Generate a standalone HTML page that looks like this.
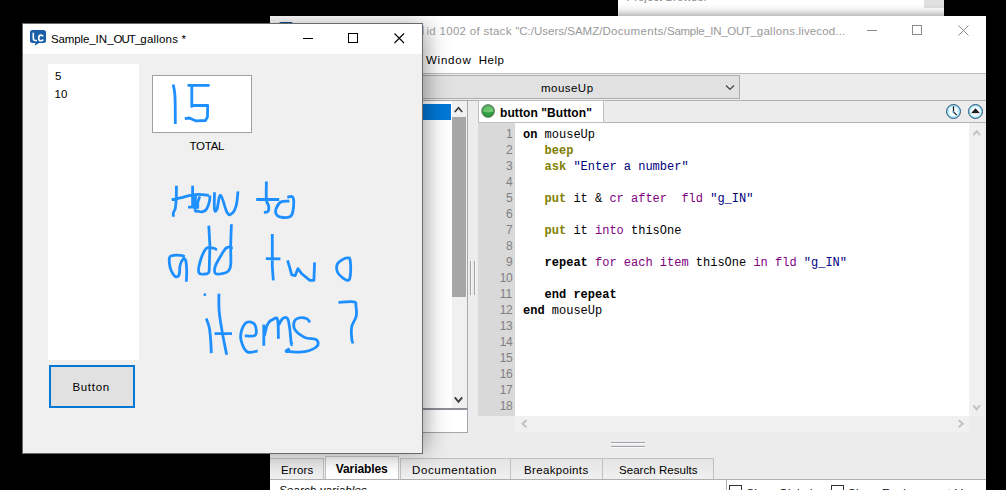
<!DOCTYPE html>
<html>
<head>
<meta charset="utf-8">
<style>
*{box-sizing:border-box;margin:0;padding:0}
html,body{width:1006px;height:490px;overflow:hidden;background:#000}
body{position:relative;font-family:"Liberation Sans",sans-serif;font-size:12px;color:#000}
.a{position:absolute}
.t{position:absolute;white-space:pre;line-height:1}
.m{font-family:"Liberation Mono",monospace}
svg{position:absolute;overflow:visible}
</style>
</head>
<body>
<!-- ===== project browser sliver ===== -->
<div class="a" style="left:618px;top:0;width:326px;height:16px;background:#fff"></div>
<div class="a" style="left:924px;top:0;width:20px;height:8px;background:#e1e1e1"></div>

<!-- ===== script editor window ===== -->
<div class="a" id="bw" style="left:270px;top:16px;width:716px;height:474px;background:#ececec;box-shadow:0 0 10px 1px rgba(0,0,0,.45)">
  <!-- title + menu -->
  <div class="a" style="left:0;top:0;width:716px;height:58px;background:#fff"></div>
  <div class="a" style="left:9px;top:6px;width:14px;height:3px;background:#0a4a8a;border-radius:2px 2px 0 0"></div>
  <div class="a" style="left:153px;top:10px;width:1px;height:9px;background:#b9c6dc"></div>
  <!-- toolbar -->
  <div class="a" style="left:0;top:57px;width:716px;height:28px;background:#ececec;border-top:1px solid #bdbdbd;border-bottom:1px solid #b0b0b0"></div>
  <!-- dropdown -->
  <div class="a" style="left:100px;top:59px;width:370px;height:24px;background:#e1e1e1;border:1px solid #adadad"></div>
  <!-- tab strip line -->
  <div class="a" style="left:208px;top:106px;width:508px;height:1px;background:#b4b4b4"></div>
  <!-- object tab -->
  <div class="a" style="left:208px;top:84px;width:126px;height:23px;background:#fff;border:1px solid #c0c0c0"></div>
  <!-- left list pane -->
  <div class="a" style="left:140px;top:84px;width:58px;height:309px;background:#fff;border:1px solid #a8a8a8"></div>
  <div class="a" style="left:140px;top:88px;width:41px;height:16px;background:#0078d7"></div>
  <div class="a" style="left:182px;top:85px;width:15px;height:307px;background:#f0f0f0"></div>
  <div class="a" style="left:182px;top:101px;width:14px;height:180px;background:#a6a6a6"></div>
  <div class="a" style="left:140px;top:392px;width:58px;height:25px;background:#fff;border:1px solid #a4a4ac;border-top:2px solid #8e8e96"></div>
  <!-- code editor -->
  <div class="a" style="left:208px;top:107px;width:37px;height:293px;background:#d9d9d9"></div>
  <div class="a" style="left:245px;top:107px;width:454px;height:293px;background:#fff"></div>
  <!-- v scrollbar -->
  <div class="a" style="left:699px;top:107px;width:15px;height:293px;background:#f0f0f0"></div>
  <!-- h scrollbar -->
  <div class="a" style="left:245px;top:400px;width:454px;height:16px;background:#f0f0f0"></div>
  <!-- grip -->
  <div class="a" style="left:341px;top:426px;width:34px;height:1px;background:#a0a0a8"></div>
  <div class="a" style="left:341px;top:427px;width:34px;height:1px;background:#fafafa"></div>
  <div class="a" style="left:341px;top:430px;width:34px;height:1px;background:#a0a0a8"></div>
  <div class="a" style="left:341px;top:431px;width:34px;height:1px;background:#fafafa"></div>
  <div class="a" style="left:200px;top:245px;width:1px;height:34px;background:#a0a0a8"></div>
  <div class="a" style="left:201px;top:245px;width:1px;height:34px;background:#f8f8f8"></div>
  <div class="a" style="left:204px;top:245px;width:1px;height:34px;background:#a0a0a8"></div>
  <div class="a" style="left:205px;top:245px;width:1px;height:34px;background:#f8f8f8"></div>
  <!-- bottom tabs -->
  <div class="a" style="left:0;top:442px;width:54px;height:21px;background:linear-gradient(#e4e4e4,#f0f0f0);border:1px solid #c0c0c0;border-bottom:none;border-left:none"></div>
  <div class="a" style="left:130px;top:442px;width:111px;height:21px;background:linear-gradient(#e4e4e4,#f0f0f0);border:1px solid #c0c0c0;border-bottom:none"></div>
  <div class="a" style="left:241px;top:442px;width:92px;height:21px;background:linear-gradient(#e4e4e4,#f0f0f0);border:1px solid #c0c0c0;border-bottom:none;border-left:none"></div>
  <div class="a" style="left:333px;top:442px;width:111px;height:21px;background:linear-gradient(#e4e4e4,#f0f0f0);border:1px solid #c0c0c0;border-bottom:none;border-left:none"></div>
  <div class="a" style="left:55px;top:440px;width:74px;height:23px;background:linear-gradient(#f2f2f2,#fff 70%);border:1px solid #c4c4c4;border-bottom:none"></div>
  <!-- bottom panel -->
  <div class="a" style="left:0;top:463px;width:716px;height:11px;background:#fff;border-top:1px solid #b0b0b0"></div>
  <div class="a" style="left:0;top:463px;width:457px;height:11px;background:#fff;border:1px solid #b0b0b0;border-left:none;border-bottom:none"></div>
  <div class="a" style="left:459px;top:469px;width:13px;height:13px;background:#fff;border:1px solid #333"></div>
  <div class="a" style="left:561px;top:469px;width:13px;height:13px;background:#fff;border:1px solid #333"></div>
  <!-- icons -->
  <svg style="left:0;top:0" width="716" height="474" viewBox="270 16 716 474">
    <!-- window controls -->
    <g stroke="#8a8a8a" stroke-width="1" fill="none" shape-rendering="crispEdges">
      <path d="M867 30.5h10"/>
      <rect x="912.5" y="25.5" width="9" height="9"/>
    </g>
    <path d="M958.5 25.5l10 10M968.5 25.5l-10 10" stroke="#8a8a8a" stroke-width="1" fill="none"/>
    <!-- dropdown chevron -->
    <path d="M726 85.5l4 4 4-4" stroke="#444" stroke-width="1.2" fill="none"/>
    <!-- list scrollbar arrows -->
    <path d="M454.800 112l3.700-4.200 3.700 4.200" stroke="#383838" stroke-width="1.600" fill="none"/>
    <path d="M454.800 397.400l3.700 4.400 3.700-4.400" stroke="#404040" stroke-width="2" fill="none"/>
    <!-- code scrollbar arrows -->
    <path d="M973.300 135.200l3.300-4 3.300 4" stroke="#c0c0c0" stroke-width="1.900" fill="none"/>
    <path d="M973.300 405.400l3.300 4 3.300-4" stroke="#c0c0c0" stroke-width="1.900" fill="none"/>
    <path d="M526.500 420.200l-4 3.600 4 3.600" stroke="#c0c0c0" stroke-width="1.900" fill="none"/>
    <path d="M958.700 420.200l4 3.600-4 3.600" stroke="#c0c0c0" stroke-width="1.900" fill="none"/>
    <!-- green ball -->
    <defs>
      <linearGradient id="gb" x1="0" y1="0" x2="0" y2="1"><stop offset="0" stop-color="#4fb254"/><stop offset=".5" stop-color="#33a142"/><stop offset="1" stop-color="#2c9a3c"/></linearGradient><linearGradient id="gl" x1="0" y1="0" x2="1" y2="1"><stop offset="0" stop-color="#54b558"/><stop offset="1" stop-color="#86cf84"/></linearGradient>
    </defs>
    <circle cx="488.100" cy="111" r="6.300" fill="url(#gb)" stroke="#4c5c50" stroke-width=".9"/><path d="M482.600 111.600a5.500 5.500 0 0 1 11 0q-5.500 1.600-11 0z" fill="url(#gl)"/>
    <!-- clock -->
    <defs>
      <radialGradient id="cg" cx="50%" cy="50%" r="50%"><stop offset="0" stop-color="#fff"/><stop offset=".62" stop-color="#f4fbff"/><stop offset=".86" stop-color="#98dff8"/><stop offset="1" stop-color="#62c6ee"/></radialGradient>
    </defs>
    <circle cx="953.500" cy="111.500" r="7" fill="url(#cg)" stroke="#2f4a66" stroke-width=".9"/>
    <path d="M953.500 106.200v5.800l3.300 3.100" stroke="#222" stroke-width="1.300" fill="none"/>
    <circle cx="953.300" cy="112" r=".9" fill="#49a6d8"/>
    <path d="M948.300 111.500h.9M957.800 111.500h.9M953.500 116.200v.9" stroke="#8fd4f2" stroke-width=".9"/>
    <!-- up triangle button -->
    <circle cx="975.500" cy="111.500" r="7" fill="url(#cg)" stroke="#2f4a66" stroke-width=".9"/>
    <path d="M971 113.200L975.500 108.300 980 113.200z" fill="#1e1e1e"/>
    <path d="M971.300 114h8.400" stroke="#fff" stroke-width=".9"/>
  </svg>
</div>

<!-- ===== stack window ===== -->
<div class="a" id="fw" style="left:22px;top:23px;width:401px;height:431px;background:#f0f0f0;border:1px solid #6a6a6a;box-shadow:6px 0 22px -4px rgba(0,0,0,.42)">
  <div class="a" style="left:0;top:0;width:399px;height:30px;background:#fff"></div>
  <!-- field -->
  <div class="a" style="left:25px;top:40px;width:91px;height:296px;background:#fff"></div>
  <!-- total box -->
  <div class="a" style="left:129px;top:51px;width:100px;height:58px;background:#fff;border:1px solid #a0a0a0"></div>
  <!-- button -->
  <div class="a" style="left:26px;top:341px;width:86px;height:43px;background:#e1e1e1;border:2px solid #0078d7"></div>
  <svg style="left:0;top:0" width="399" height="429" viewBox="23 24 399 429">
    <!-- LC icon -->
    <path d="M32.500 30h11a2.500 2.500 0 0 1 2.500 2.500v8a2.500 2.500 0 0 1-2.500 2.500h-4.300l-4.600 2.700 .9-2.700h-3a2.500 2.500 0 0 1-2.500-2.500v-8a2.500 2.500 0 0 1 2.500-2.500z" fill="#1a5fa8"/>
    <path d="M33.300 32.700v5.500q0 2.300 2.300 2.300h1.400M43.200 36.400q-.8-1.300-2.200-1.300-2.300 0-2.300 2.800t2.300 2.800q1.400 0 2.200-1.200" stroke="#fff" stroke-width="1.600" fill="none"/>
    <!-- window controls -->
    <g stroke="#000" stroke-width="1" fill="none" shape-rendering="crispEdges">
      <path d="M303 38.500h10"/>
      <rect x="348.500" y="33.500" width="9" height="9"/>
    </g>
    <path d="M394.500 33.500l9.500 9.500M404 33.500l-9.500 9.500" stroke="#000" stroke-width="1.100" fill="none"/>
    <path d="M173.2 84.4C173.5 86.0 174.3 89.2 174.7 93.0C175.1 96.8 175.1 99.3 175.2 105.0C175.3 110.7 175.3 120.5 175.3 124.0 M187.5 85.4 L209.6 85.4 M191.8 85.4 L191.8 106.5 L192.0 105.5 L207.7 105.5 L207.5 116.8 L205.5 120.5 L195.5 120.8 L189.4 118.0 L184.8 118.6 M176.4 185.7C176.4 188.2 176.4 195.3 176.2 199.5C176.0 203.7 175.7 206.3 175.2 208.7C174.7 211.1 173.7 211.2 173.4 212.7C173.1 214.2 173.4 216.0 173.4 216.8 M171.6 199.7C173.2 199.4 176.8 198.7 180.3 197.9C183.8 197.1 187.1 196.0 190.5 195.4C193.9 194.8 195.3 194.4 198.7 194.4C202.1 194.4 207.0 195.2 208.9 195.4 M192.6 185.7 L192.6 206.6 M188.0 207.1 L194.6 207.1 M195.6 195.4C195.5 198.0 194.7 206.8 195.1 209.7C195.5 212.6 196.3 210.8 197.7 211.2C199.1 211.6 201.1 212.2 202.8 211.7C204.5 211.2 205.6 210.6 206.8 208.7C208.0 206.8 208.8 203.9 209.4 201.5C210.0 199.1 209.8 196.5 209.9 195.4 M199.7 196.4 L197.7 202.5 L197.7 208.7 M214.5 192.3C214.5 195.4 214.0 206.1 214.5 209.2C215.0 212.3 215.9 211.7 217.0 209.2C218.1 206.7 218.7 194.8 220.6 195.4C222.5 196.0 225.1 209.4 227.2 212.7C229.3 216.0 230.6 214.7 232.3 213.2C234.0 211.7 235.4 208.6 236.4 204.6C237.4 200.6 237.7 193.7 238.0 191.3 M266.4 181.6C266.4 184.9 266.0 195.1 266.4 199.5C266.8 203.9 268.1 203.6 268.5 205.6C268.9 207.6 268.8 209.2 268.5 210.4C268.2 211.6 267.8 211.7 267.0 212.1C266.2 212.5 264.5 212.3 263.9 212.4 M256.2 199.5 L279.2 199.5 M287.3 197.2C288.3 197.2 292.0 194.9 293.0 197.4C294.0 199.9 293.6 207.1 293.0 210.7C292.4 214.3 292.3 215.7 289.9 216.8C287.5 217.9 282.2 217.4 279.7 216.8C277.2 216.2 276.8 215.3 276.1 213.8C275.4 212.3 275.3 210.9 276.1 208.7C276.9 206.5 278.3 203.4 280.7 202.0C283.1 200.6 287.8 201.2 289.4 201.0 M184.9 256.7C184.1 256.5 182.7 255.6 180.7 255.4C178.7 255.2 175.8 255.0 173.8 255.4C171.8 255.8 170.3 255.3 169.6 257.4C168.9 259.5 169.4 264.0 170.0 267.1C170.6 270.2 171.9 272.3 173.1 274.1C174.3 275.9 175.5 276.9 176.6 276.9C177.7 276.9 178.7 276.1 179.3 274.1C179.9 272.1 179.4 268.5 180.0 265.8C180.6 263.1 181.8 260.5 182.8 259.5C183.8 258.5 184.9 258.0 185.6 260.2C186.3 262.4 186.6 267.4 186.7 271.3C186.8 275.2 186.4 279.8 186.3 281.7 M208.8 225.6 L209.9 245.7 L209.2 270.7 L208.5 273.5 M216.9 249.9C216.3 249.6 215.4 248.4 213.4 248.2C211.4 248.0 208.3 245.9 205.8 248.8C203.3 251.7 200.7 259.3 199.5 263.8C198.3 268.3 197.8 271.7 199.5 273.5C201.2 275.3 206.8 273.5 208.5 273.5 M231.4 224.2C231.3 228.1 230.8 238.2 230.7 245.7C230.6 253.2 231.2 260.5 230.7 265.2C230.2 269.9 229.4 269.9 228.0 271.4C226.6 272.9 225.4 273.1 223.1 273.5C220.8 273.9 216.9 274.8 215.5 273.5C214.1 272.2 214.2 269.8 215.2 266.5C216.2 263.2 218.9 258.8 221.0 255.4C223.1 252.0 224.4 249.2 226.6 247.8C228.8 246.4 231.7 247.8 232.8 247.8 M272.3 234.0 L272.3 266.5 L273.3 280.4 M265.8 258.6 L280.4 258.9 M287.6 260.3 L291.8 274.9 L295.2 275.6 L298.0 268.6 L301.5 273.5 L309.8 280.4 L313.9 280.4 L314.6 262.4 M350.7 258.2C349.7 258.2 347.6 257.2 345.2 258.2C342.8 259.2 338.9 261.3 337.5 263.8C336.1 266.3 336.6 269.6 337.5 272.1C338.4 274.6 340.5 276.1 342.4 277.6C344.3 279.1 346.5 280.4 347.9 280.4C349.3 280.4 349.5 280.1 350.0 277.6C350.5 275.1 350.7 269.9 350.7 266.5C350.7 263.1 350.1 260.3 350.0 258.9 M206.3 318.5C206.9 320.3 208.6 323.7 209.4 328.3C210.2 332.9 210.6 338.8 210.9 343.4C211.2 348.0 211.2 351.4 211.3 353.2 M218.9 293.6C219.0 296.9 218.5 304.0 219.2 311.7C219.9 319.4 221.5 327.9 222.9 335.8C224.3 343.7 226.0 351.2 226.7 354.7 M214.6 333.6 L232.0 333.6 M244.8 335.8C246.7 335.7 253.6 337.2 255.4 335.1C257.2 333.0 256.2 326.8 254.7 324.5C253.2 322.2 249.5 321.3 247.1 322.3C244.7 323.3 242.9 326.5 241.8 329.8C240.7 333.1 240.1 336.4 241.1 340.4C242.1 344.4 244.1 349.8 247.1 351.7C250.1 353.6 255.8 351.1 257.7 351.0 M263.8 324.5 L263.8 345.7 M264.4 335.8C265.0 333.6 266.1 326.9 267.8 323.8C269.5 320.7 272.1 319.6 273.9 318.9C275.7 318.2 276.9 316.3 277.7 320.0C278.5 323.7 278.3 335.4 278.4 338.9 M278.4 325.3C279.2 324.1 281.2 319.7 282.9 318.5C284.6 317.3 286.3 316.7 287.5 318.5C288.7 320.3 289.0 323.7 289.7 328.3C290.4 332.9 290.7 340.5 291.3 343.4C291.9 346.3 292.5 344.1 292.8 344.2 M310.1 322.3C309.4 321.6 308.5 319.3 306.4 318.5C304.3 317.7 301.0 317.4 298.8 318.0C296.6 318.6 295.0 319.3 294.3 321.5C293.6 323.7 293.1 326.9 295.0 329.8C296.9 332.7 300.9 335.6 304.8 337.4C308.7 339.2 314.0 338.0 316.2 339.6C318.4 341.2 319.0 344.2 316.9 346.4C314.8 348.6 309.8 350.7 304.8 351.7C299.8 352.7 293.1 351.8 289.7 351.7C286.3 351.6 286.0 351.6 286.0 351.0C286.0 350.4 289.0 349.1 289.7 348.7 M338.5 302.3C341.3 302.2 350.7 301.3 353.9 301.9C357.1 302.5 355.5 303.0 355.9 305.6C356.3 308.2 357.0 312.3 356.2 316.2C355.4 320.1 352.5 322.8 351.7 326.8C350.9 330.8 351.5 335.1 351.7 338.1C351.9 341.1 352.7 342.4 352.9 343.4" stroke="#1e8fff" stroke-width="2.8" fill="none" stroke-linecap="butt" stroke-linejoin="round"/><circle cx="204.8" cy="294.7" r="1.4" fill="#1e8fff"/>
  </svg>
</div>
<div class="t" style="left:50.90px;top:34.00px;font-size:11.5px;color:#000;letter-spacing:-0.099px;">Sample_</div>
<div class="t" style="left:95.60px;top:34.00px;font-size:11.5px;color:#000;letter-spacing:0.031px;">IN_</div>
<div class="t" style="left:113.60px;top:34.00px;font-size:11.5px;color:#000;letter-spacing:-0.993px;">OUT_</div>
<div class="t" style="left:140.30px;top:34.00px;font-size:11.5px;color:#000;letter-spacing:0.197px;">gallons *</div>
<div class="t" style="left:55.00px;top:71.00px;font-size:11.5px;color:#000;">5</div>
<div class="t" style="left:54.50px;top:89.00px;font-size:11.5px;color:#000;">10</div>
<div class="t" style="left:189.60px;top:141.00px;font-size:11.5px;color:#000;letter-spacing:-0.300px;">TOTAL</div>
<div class="t" style="left:72.40px;top:382.00px;font-size:11.5px;color:#000;letter-spacing:0.708px;">Button</div>
<div class="t" style="left:426.50px;top:26.00px;font-size:11.5px;color:#999;letter-spacing:0.291px;">id 1002 of stack </div>
<div class="t" style="left:515.20px;top:26.00px;font-size:11.5px;color:#999;letter-spacing:0.003px;">"C:/Users/SAMZ/</div>
<div class="t" style="left:602.40px;top:26.00px;font-size:11.5px;color:#999;letter-spacing:0.334px;">Documents/</div>
<div class="t" style="left:667.10px;top:26.00px;font-size:11.5px;color:#999;letter-spacing:-0.312px;">Sample_IN_OUT_</div>
<div class="t" style="left:756.70px;top:26.00px;font-size:11.5px;color:#999;letter-spacing:0.292px;">gallons</div>
<div class="t" style="left:795.20px;top:26.00px;font-size:11.5px;color:#999;letter-spacing:0.147px;">.livecod...</div>
<div class="t" style="left:426.00px;top:55.00px;font-size:11.5px;color:#000;letter-spacing:0.766px;">Window</div>
<div class="t" style="left:478.80px;top:55.00px;font-size:11.5px;color:#000;letter-spacing:0.461px;">Help</div>
<div class="t" style="left:541.00px;top:83.00px;font-size:11.5px;color:#000;letter-spacing:0.469px;">mouseUp</div>
<div class="t" style="left:500.00px;top:107.00px;font-size:12px;color:#000;font-weight:bold;letter-spacing:0.087px;">button "Button"</div>
<div class="t" style="left:506.05px;top:128.00px;font-size:12px;color:#808080;letter-spacing:-0.338px;">1</div>
<div class="t" style="left:506.05px;top:144.00px;font-size:12px;color:#808080;letter-spacing:-0.338px;">2</div>
<div class="t" style="left:506.05px;top:160.00px;font-size:12px;color:#808080;letter-spacing:-0.338px;">3</div>
<div class="t" style="left:506.05px;top:176.00px;font-size:12px;color:#808080;letter-spacing:-0.338px;">4</div>
<div class="t" style="left:506.05px;top:192.00px;font-size:12px;color:#808080;letter-spacing:-0.338px;">5</div>
<div class="t" style="left:506.05px;top:208.00px;font-size:12px;color:#808080;letter-spacing:-0.338px;">6</div>
<div class="t" style="left:506.05px;top:224.00px;font-size:12px;color:#808080;letter-spacing:-0.338px;">7</div>
<div class="t" style="left:506.05px;top:240.00px;font-size:12px;color:#808080;letter-spacing:-0.338px;">8</div>
<div class="t" style="left:506.05px;top:256.00px;font-size:12px;color:#808080;letter-spacing:-0.338px;">9</div>
<div class="t" style="left:499.70px;top:272.00px;font-size:12px;color:#808080;letter-spacing:-0.330px;">10</div>
<div class="t" style="left:499.70px;top:288.00px;font-size:12px;color:#808080;letter-spacing:0.116px;">11</div>
<div class="t" style="left:499.70px;top:304.00px;font-size:12px;color:#808080;letter-spacing:-0.330px;">12</div>
<div class="t" style="left:499.70px;top:320.00px;font-size:12px;color:#808080;letter-spacing:-0.330px;">13</div>
<div class="t" style="left:499.70px;top:336.00px;font-size:12px;color:#808080;letter-spacing:-0.330px;">14</div>
<div class="t" style="left:499.70px;top:352.00px;font-size:12px;color:#808080;letter-spacing:-0.330px;">15</div>
<div class="t" style="left:499.70px;top:368.00px;font-size:12px;color:#808080;letter-spacing:-0.330px;">16</div>
<div class="t" style="left:499.70px;top:384.00px;font-size:12px;color:#808080;letter-spacing:-0.330px;">17</div>
<div class="t" style="left:499.70px;top:400.00px;font-size:12px;color:#808080;letter-spacing:-0.330px;">18</div>
<div class="t m" style="left:523.00px;top:129.00px;font-size:12px;color:#000;font-weight:bold;">on</div>
<div class="t m" style="left:544.60px;top:129.00px;font-size:12px;color:#000;">mouseUp</div>
<div class="t m" style="left:544.60px;top:145.00px;font-size:12px;color:#808000;font-weight:bold;">beep</div>
<div class="t m" style="left:544.60px;top:161.00px;font-size:12px;color:#808000;font-weight:bold;">ask</div>
<div class="t m" style="left:573.40px;top:161.00px;font-size:12px;color:#000080;">"Enter a number"</div>
<div class="t m" style="left:544.60px;top:193.00px;font-size:12px;color:#808000;font-weight:bold;">put</div>
<div class="t m" style="left:573.40px;top:193.00px;font-size:12px;color:#000;">it &amp;</div>
<div class="t m" style="left:609.40px;top:193.00px;font-size:12px;color:#800080;">cr after &nbsp;fld</div>
<div class="t m" style="left:710.20px;top:193.00px;font-size:12px;color:#000080;">"g_IN"</div>
<div class="t m" style="left:544.60px;top:225.00px;font-size:12px;color:#808000;font-weight:bold;">put</div>
<div class="t m" style="left:573.40px;top:225.00px;font-size:12px;color:#000;">it</div>
<div class="t m" style="left:595.00px;top:225.00px;font-size:12px;color:#800080;">into</div>
<div class="t m" style="left:631.00px;top:225.00px;font-size:12px;color:#000;">thisOne</div>
<div class="t m" style="left:544.60px;top:257.00px;font-size:12px;color:#000;font-weight:bold;">repeat</div>
<div class="t m" style="left:595.00px;top:257.00px;font-size:12px;color:#800080;">for each item</div>
<div class="t m" style="left:695.80px;top:257.00px;font-size:12px;color:#000;">thisOne</div>
<div class="t m" style="left:753.40px;top:257.00px;font-size:12px;color:#800080;">in fld</div>
<div class="t m" style="left:803.80px;top:257.00px;font-size:12px;color:#000080;">"g_IN"</div>
<div class="t m" style="left:544.60px;top:289.00px;font-size:12px;color:#000;font-weight:bold;">end repeat</div>
<div class="t m" style="left:523.00px;top:305.00px;font-size:12px;color:#000;font-weight:bold;">end</div>
<div class="t m" style="left:551.80px;top:305.00px;font-size:12px;color:#000;">mouseUp</div>
<div class="t" style="left:281.00px;top:465.00px;font-size:11.5px;color:#000;letter-spacing:0.198px;">Errors</div>
<div class="t" style="left:335.80px;top:463.00px;font-size:12px;color:#000;font-weight:bold;letter-spacing:-0.102px;">Variables</div>
<div class="t" style="left:412.00px;top:465.00px;font-size:11.5px;color:#000;letter-spacing:0.588px;">Documentation</div>
<div class="t" style="left:524.00px;top:465.00px;font-size:11.5px;color:#000;letter-spacing:0.342px;">Breakpoints</div>
<div class="t" style="left:619.00px;top:465.00px;font-size:11.5px;color:#000;letter-spacing:0.037px;">Search Results</div>
<div class="t" style="left:279.00px;top:485.00px;font-size:11.5px;color:#000;font-style:italic;letter-spacing:0.146px;">Search variables</div>
<div class="t" style="left:746.50px;top:488.00px;font-size:11.5px;color:#000;letter-spacing:0.086px;">Show Globals</div>
<div class="t" style="left:848.00px;top:488.00px;font-size:11.5px;color:#000;letter-spacing:0.423px;">Show Environment V</div>
<div class="t" style="left:626.50px;top:-7.80px;font-size:11.5px;color:#888;letter-spacing:-0.011px;">Project Browser</div>
</body>
</html>
